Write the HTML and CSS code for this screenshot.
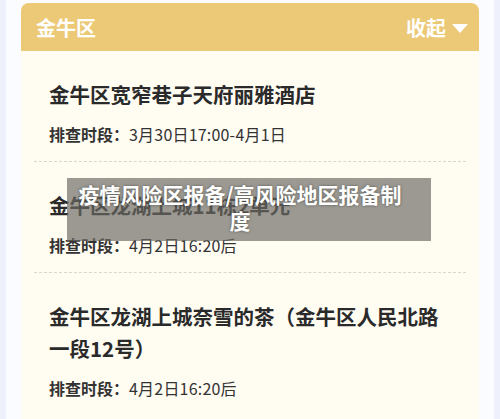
FILE: index.html
```html
<!DOCTYPE html>
<html lang="zh-CN">
<head>
    <meta charset="UTF-8">
    <meta name="viewport" content="width=device-width, initial-scale=1.0">
    <title>疫情风险区报备</title>
    <link rel="stylesheet" href="styles.css">
</head>
<body>

    <div class="page">
        <div class="card">
            <div class="card-head">
                <span class="area">金牛区</span>
                <span class="fold">收起 <i class="arrow"></i></span>
            </div>

            <div class="item">
                <h3>金牛区宽窄巷子天府丽雅酒店</h3>
                <p class="time"><b>排查时段：</b>3月30日17:00-4月1日</p>
            </div>
            <div class="item">
                <h3>金牛区龙湖上城11栋2单元</h3>
                <p class="time"><b>排查时段：</b>4月2日16:20后</p>
            </div>
            <div class="item last">
                <h3>金牛区龙湖上城奈雪的茶（金牛区人民北路一段12号）</h3>
                <p class="time"><b>排查时段：</b>4月2日16:20后</p>
            </div>
        </div>
    </div>

    <div class="banner">疫情风险区报备/高风险地区报备制度</div>

</body>
</html>
```

FILE: styles.css
```css
body {
    margin: 0;
    background: #eef0fb;
    font-family: "Noto Sans CJK SC", "Noto Sans", sans-serif;
    color: #2b2b2b;
}
.page {
    margin: 0 6px;
    padding: 3px 15px 0;
    background: #fbfcff;
    height: 416px;
    overflow: hidden;
}
.card {
    background: #fffcf2;
    border-radius: 8px 8px 0 0;
    overflow: hidden;
    min-height: 430px;
}
.card-head {
    display: flex;
    justify-content: space-between;
    align-items: center;
    height: 48px;
    padding: 0 11px 0 15px;
    background: #ecc977;
    color: #fff;
    font-size: 20px;
    font-weight: bold;
}
.fold {
    display: flex;
    align-items: center;
    gap: 6px;
}
.arrow {
    width: 0;
    height: 0;
    border-left: 8px solid transparent;
    border-right: 8px solid transparent;
    border-top: 9px solid #fff;
    margin-top: 2px;
}
.item {
    margin: 0 13px;
    padding: 27px 15px 16px;
    border-bottom: 1px dashed #d9d6cc;
}
.item.last {
    border-bottom: none;
}
.item h3 {
    margin: 0;
    font-size: 20.5px;
    line-height: 32px;
    font-weight: bold;
    color: #2a2a2a;
}
.time {
    margin: 13px 0 0;
    font-size: 16px;
    line-height: 22px;
    color: #333;
    letter-spacing: 0.2px;
}
.time b {
    font-weight: bold;
    letter-spacing: 0;
}
.banner {
    position: absolute;
    left: 67px;
    top: 178px;
    width: 326px;
    padding: 3px 28px 8px 10px;
    background: rgba(108, 106, 100, 0.68);
    color: #fff;
    font-size: 21px;
    line-height: 26px;
    font-weight: bold;
    text-align: center;
    text-shadow: 0 0 3px rgba(0, 0, 0, 0.45);
}
```
